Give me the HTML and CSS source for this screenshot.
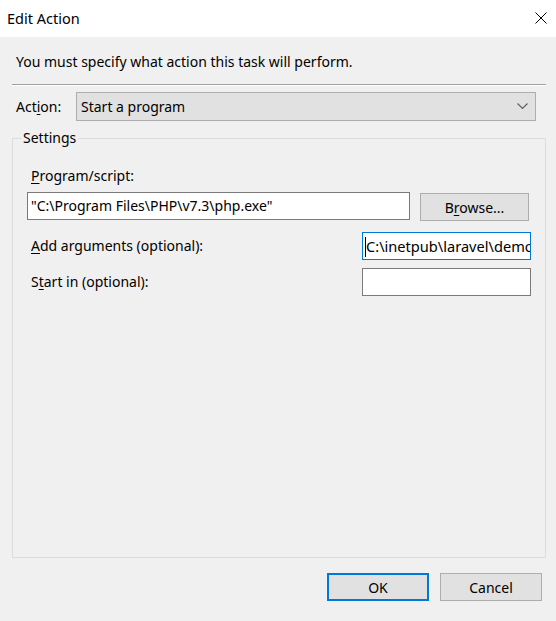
FILE: index.html
```html
<!DOCTYPE html>
<html lang="en">
<head>
  <meta charset="UTF-8" />
  <meta name="viewport" content="width=device-width, initial-scale=1.0"/>
  <title>Edit Action</title>
  <link rel="stylesheet" href="styles.css">
</head>
<body>
  <div class="titlebar">
    <span class="title">Edit Action</span>
    <svg class="close" width="12" height="12" viewBox="0 0 12 12">
      <path d="M0.5 0.5 L11.5 11.5 M11.5 0.5 L0.5 11.5" stroke="#000" stroke-width="1" fill="none"/>
    </svg>
  </div>

  <div class="dialog">
    <p class="intro">You must specify what action this task will perform.</p>
    <div class="sep"></div>

    <div class="action-row">
      <span class="label">Act<u>i</u>on:</span>
      <div class="combo">
        <span>Start a program</span>
        <svg width="11" height="7" viewBox="0 0 11 7">
          <polyline points="0.5,0.5 5.5,5.5 10.5,0.5" stroke="#606060" stroke-width="1.2" fill="none"/>
        </svg>
      </div>
    </div>

    <fieldset class="settings">
      <legend>Settings</legend>

      <div class="label"><u>P</u>rogram/script:</div>
      <div class="program-row">
        <div class="field program">"C:\Program Files\PHP\v7.3\php.exe"</div>
        <button class="btn browse">B<u>r</u>owse...</button>
      </div>

      <div class="opt-row first">
        <span class="label"><u>A</u>dd arguments (optional):</span>
        <div class="field small focused"><span class="caret"></span>C:\inetpub\laravel\demo\artisan schedule:run</div>
      </div>
      <div class="opt-row">
        <span class="label">S<u>t</u>art in (optional):</span>
        <div class="field small"></div>
      </div>
    </fieldset>

    <div class="buttons">
      <button class="btn default">OK</button>
      <button class="btn">Cancel</button>
    </div>
  </div>
</body>
</html>
```

FILE: styles.css
```css
body {
  margin: 0;
  background: #f0f0f0;
  font-family: 'Noto Sans', sans-serif;
  font-size: 14px;
  color: #000;
  width: 556px;
  height: 621px;
  overflow: hidden;
}
u {
  text-underline-offset: 2px;
}
.titlebar {
  height: 37px;
  background: #fff;
  display: flex;
  align-items: center;
  justify-content: space-between;
  padding: 0 9px 0 7px;
}
.title {
  font-size: 14.5px;
  line-height: 20px;
  margin-top: -1px;
}
.close {
  margin-top: -2px;
}
.dialog {
  padding: 0 10px 0 12px;
}
.intro {
  margin: 15px 0 0 4px;
  line-height: 20px;
}
.sep {
  margin-top: 12px;
  border-top: 1px solid #a0a0a0;
  border-bottom: 1px solid #fff;
}
.action-row {
  display: flex;
  align-items: center;
  margin-top: 6px;
  padding-left: 4px;
}
.action-row .label {
  width: 60px;
}
.combo {
  width: 460px;
  height: 29px;
  box-sizing: border-box;
  border: 1px solid #adadad;
  background: #e1e1e1;
  display: flex;
  align-items: center;
  justify-content: space-between;
  padding: 0 7px 0 4px;
}
.combo span {
  margin-top: -1px;
}
.settings {
  margin: 7px 0 0;
  height: 430px;
  box-sizing: border-box;
  border: 1px solid #dcdcdc;
  padding: 18px 14px 0 14px;
}
.settings legend {
  padding: 0 2px;
  margin-left: -6px;
  line-height: 20px;
}
.settings .label {
  line-height: 20px;
  padding-left: 4px;
}
.program-row {
  display: flex;
  margin-top: 6px;
}
.field {
  height: 28px;
  box-sizing: border-box;
  border: 1px solid #7a7a7a;
  background: #fff;
  line-height: 26px;
  padding-left: 3px;
  white-space: nowrap;
  overflow: hidden;
}
.program {
  width: 383px;
}
.btn {
  font: inherit;
  color: #000;
  height: 28px;
  box-sizing: border-box;
  border: 1px solid #adadad;
  background: #e1e1e1;
  padding: 0;
  width: 102px;
}
.browse {
  width: 109px;
  margin: 1px 0 0 10px;
}
.opt-row {
  display: flex;
  align-items: center;
  justify-content: space-between;
  margin-top: 8px;
}
.opt-row.first {
  margin-top: 11px;
}
.small {
  width: 169px;
}
.focused {
  border-color: #0078d7;
  padding-left: 2px;
  font-size: 14.6px;
}
.caret {
  display: inline-block;
  width: 1px;
  height: 20px;
  background: #000;
  vertical-align: middle;
  margin-top: -2px;
}
.buttons {
  display: flex;
  justify-content: flex-end;
  gap: 11px;
  margin: 15px 4px 0 0;
}
.default {
  border: 2px solid #0078d7;
}
```
